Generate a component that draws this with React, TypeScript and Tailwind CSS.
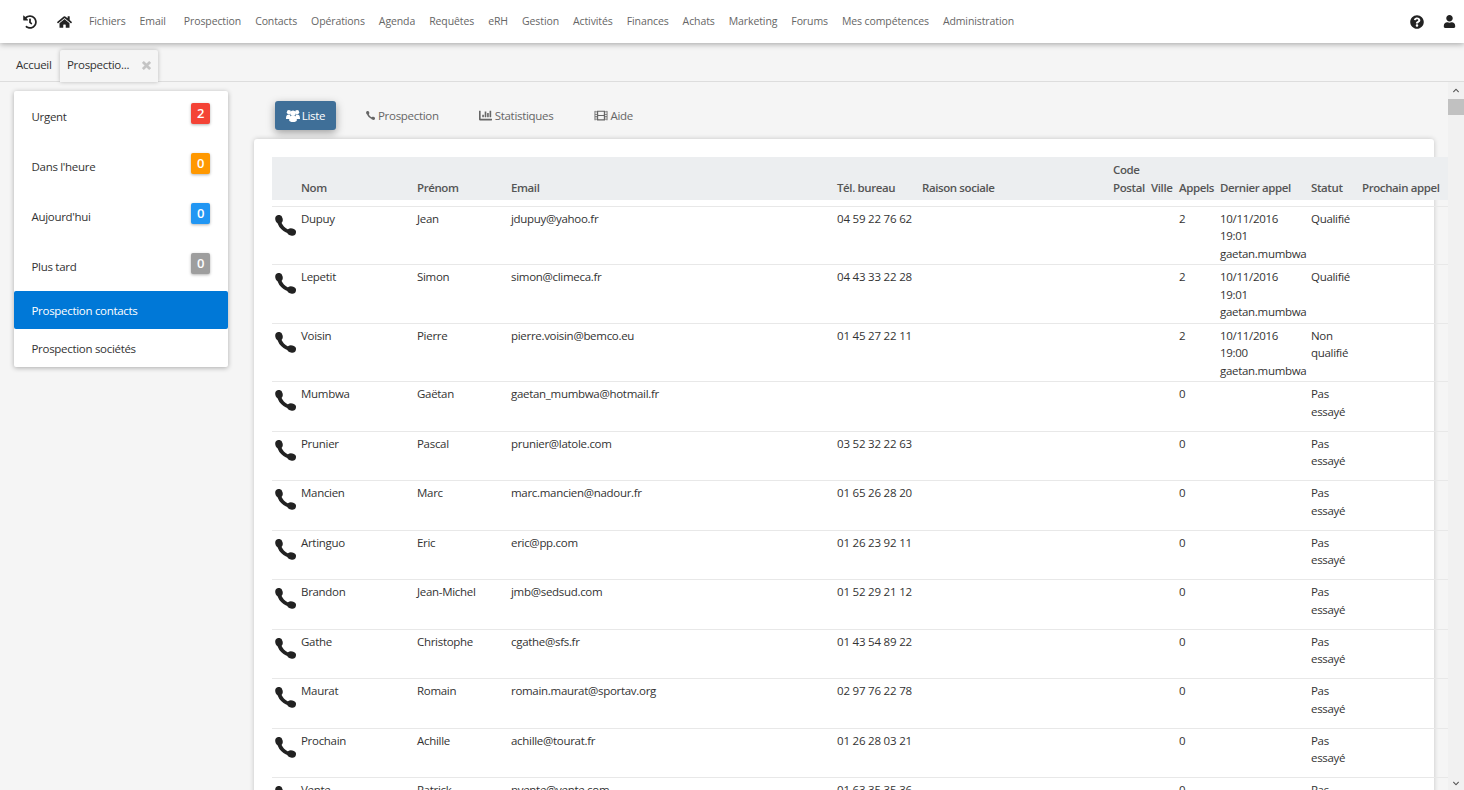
import { FaHistory, FaHome, FaQuestionCircle, FaUser, FaChartBar, FaFilm, FaChevronUp, FaChevronDown } from "react-icons/fa";

const menus = ["Fichiers", "Email", "Prospection", "Contacts", "Opérations", "Agenda", "Requêtes", "eRH", "Gestion", "Activités", "Finances", "Achats", "Marketing", "Forums", "Mes compétences", "Administration"];

const counters = [
  { label: "Urgent", count: 2, color: "bg-[#f44336]" },
  { label: "Dans l'heure", count: 0, color: "bg-[#ff9800]" },
  { label: "Aujourd'hui", count: 0, color: "bg-[#2196f3]" },
  { label: "Plus tard", count: 0, color: "bg-[#9e9e9e]" },
];

const rows = [
  ["Dupuy", "Jean", "jdupuy@yahoo.fr", "04 59 22 76 62", "2", "10/11/2016 19:01 gaetan.mumbwa", "Qualifié"],
  ["Lepetit", "Simon", "simon@climeca.fr", "04 43 33 22 28", "2", "10/11/2016 19:01 gaetan.mumbwa", "Qualifié"],
  ["Voisin", "Pierre", "pierre.voisin@bemco.eu", "01 45 27 22 11", "2", "10/11/2016 19:00 gaetan.mumbwa", "Non qualifié"],
  ["Mumbwa", "Gaëtan", "gaetan_mumbwa@hotmail.fr", "", "0", "", "Pas essayé"],
  ["Prunier", "Pascal", "prunier@latole.com", "03 52 32 22 63", "0", "", "Pas essayé"],
  ["Mancien", "Marc", "marc.mancien@nadour.fr", "01 65 26 28 20", "0", "", "Pas essayé"],
  ["Artinguo", "Eric", "eric@pp.com", "01 26 23 92 11", "0", "", "Pas essayé"],
  ["Brandon", "Jean-Michel", "jmb@sedsud.com", "01 52 29 21 12", "0", "", "Pas essayé"],
  ["Gathe", "Christophe", "cgathe@sfs.fr", "01 43 54 89 22", "0", "", "Pas essayé"],
  ["Maurat", "Romain", "romain.maurat@sportav.org", "02 97 76 22 78", "0", "", "Pas essayé"],
  ["Prochain", "Achille", "achille@tourat.fr", "01 26 28 03 21", "0", "", "Pas essayé"],
  ["Vente", "Patrick", "pvente@vente.com", "01 63 35 35 36", "0", "", "Pas essayé"],
];

const widths = [26, 116, 94, 326, 85, 191, 38, 28, 41, 91, 51, 89];

// handset with heavy ends and a thin neck, as in the row icons
function Handset({ className }: { className: string }) {
  return (
    <svg viewBox="0 0 21 21" className={className} fill="currentColor">
      <path d="M4 3.5C3.6 10.5 9.5 16.8 17 17" fill="none" stroke="currentColor" strokeWidth="3.8" />
      <ellipse cx="4" cy="4.2" rx="3.7" ry="4.2" transform="rotate(-12 4 4.2)" />
      <ellipse cx="16.6" cy="17" rx="4.4" ry="3.6" transform="rotate(12 16.6 17)" />
    </svg>
  );
}

// three busts, the middle one in front
function Group({ className }: { className: string }) {
  return (
    <svg viewBox="0 0 14 13" className={className} fill="currentColor">
      <circle cx="2.9" cy="3.2" r="2.1" />
      <circle cx="11.1" cy="3.2" r="2.1" />
      <path d="M0 9.5C0 6.5 1.2 5.6 3 5.6h1.2v4.4H0zM14 9.5c0-3-1.2-3.9-3-3.9H9.8v4.4H14z" />
      <circle cx="7" cy="4.2" r="2.7" />
      <path d="M3.2 11.5V9.6c0-2 1.2-2.9 2.4-2.9h2.8c1.2 0 2.4.9 2.4 2.9v1.9c0 .9-1.6 1.5-3.8 1.5s-3.8-.6-3.8-1.5z" />
    </svg>
  );
}

export default function App() {
  return (
    <div className="h-[790px] overflow-hidden bg-[#f5f5f5] font-['Open_Sans',sans-serif] text-[11.5px] leading-[17.5px] tracking-[-0.3px] text-[#333]">
      {/* top menu */}
      <header className="relative z-20 flex h-[43px] items-center bg-white pl-[23px] pr-[8px] shadow-[0_1px_6px_rgba(0,0,0,0.35)]">
        <FaHistory className="h-[14px] w-[14px] text-[#222]" />
        <FaHome className="ml-[20px] h-[14px] w-[15px] text-[#222]" />
        <nav className="ml-[17px] mt-[1px] flex gap-[14px] text-[10.5px] tracking-[-0.1px] text-[#666]">
          {menus.map((m) => (
            <span key={m} className={m === "Prospection" ? "ml-[4px]" : ""}>{m}</span>
          ))}
        </nav>
        <div className="ml-auto flex items-center gap-[19px]">
          <FaQuestionCircle className="h-[14px] w-[14px] text-[#222]" />
          <FaUser className="h-[13px] w-[13px] text-[#222]" />
        </div>
      </header>

      {/* open tabs */}
      <div className="flex h-[39px] items-end border-b border-[#ddd] pl-[16px]">
        <span className="mb-[8px] w-[44px]">Accueil</span>
        <div className="relative top-px flex h-[32px] w-[98px] items-center justify-between rounded-t-[2px] bg-[#f5f5f5] pb-[2px] pl-[7px] pr-[7px] shadow-[0_0_4px_rgba(0,0,0,0.25)]">
          <span>Prospectio...</span>
          <svg viewBox="0 0 10 10" className="h-[9px] w-[9px] text-[#c4c4c4]" stroke="currentColor" strokeWidth="3">
            <path d="M1 1l8 8M9 1l-8 8" />
          </svg>
        </div>
      </div>

      <div className="flex h-[708px]">
        <div className="flex w-[1448px] items-start overflow-hidden">
          {/* left menu */}
          <aside className="ml-[14px] mt-[9px] w-[214px] shrink-0 rounded-[2px] bg-white shadow-[0_1px_5px_rgba(0,0,0,0.3)]">
            {counters.map((c) => (
              <div key={c.label} className="relative flex h-[50px] items-center pl-[17.5px]">
                <span className="mt-[1px]">{c.label}</span>
                <span className={`absolute left-[177px] top-[12px] flex h-[21px] w-[19px] items-center justify-center rounded-[2px] text-[13px] font-semibold text-white shadow-[0_1px_3px_rgba(0,0,0,0.3)] ${c.color}`}>{c.count}</span>
              </div>
            ))}
            <div className="flex h-[38px] items-center rounded-[2px] bg-[#0078d7] pl-[17.5px] pt-[2px] text-white">Prospection contacts</div>
            <div className="flex h-[38px] items-center pl-[17.5px] pt-[2px]">Prospection sociétés</div>
          </aside>

          <main className="ml-[26px] flex w-[1194px] shrink-0 flex-col">
            {/* view buttons */}
            <div className="ml-[21px] mt-[19px] flex h-[29px] items-center text-[#666]">
              <span className="flex h-[29px] w-[61px] items-center justify-center gap-[2px] rounded-[3px] bg-[#3f6f98] text-white shadow-[0_3px_8px_rgba(0,0,0,0.35)]">
                <Group className="h-[13px] w-[14px]" />Liste
              </span>
              <span className="ml-[30px] flex items-center gap-[3px]"><Handset className="h-[9px] w-[9px]" />Prospection</span>
              <span className="ml-[40px] flex items-center gap-[3px]"><FaChartBar className="h-[13px] w-[13px]" />Statistiques</span>
              <span className="ml-[41px] flex items-center gap-[2px]"><FaFilm className="h-[13px] w-[14px]" />Aide</span>
            </div>

            {/* list */}
            <div className="mt-[9px] h-[660px] w-[1180px] rounded-t-[3px] bg-white pl-[18px] pt-[18px] shadow-[0_0_5px_rgba(0,0,0,0.2)]">
              <table className="w-[1176px] table-fixed border-collapse">
                <colgroup>
                  {widths.map((w, i) => <col key={i} style={{ width: w }} />)}
                </colgroup>
                <thead>
                  <tr className="h-[43px] bg-[#eceef0] text-left align-bottom text-[#555]">
                    <th />
                    <th className="px-[3px] pb-[4px] font-semibold tracking-[-0.4px]">Nom</th>
                    <th className="px-[3px] pb-[4px] font-semibold tracking-[-0.4px]">Prénom</th>
                    <th className="px-[3px] pb-[4px] font-semibold tracking-[-0.4px]">Email</th>
                    <th className="whitespace-nowrap px-[3px] pb-[4px] font-semibold tracking-[-0.4px]">Tél. bureau</th>
                    <th className="px-[3px] pb-[4px] font-semibold tracking-[-0.4px]">Raison sociale</th>
                    <th className="px-[3px] pb-[4px] font-semibold tracking-[-0.4px]">Code Postal</th>
                    <th className="px-[3px] pb-[4px] font-semibold tracking-[-0.4px]">Ville</th>
                    <th className="px-[3px] pb-[4px] font-semibold tracking-[-0.4px]">Appels</th>
                    <th className="whitespace-nowrap px-[3px] pb-[4px] font-semibold tracking-[-0.4px]">Dernier appel</th>
                    <th className="px-[3px] pb-[4px] font-semibold tracking-[-0.4px]">Statut</th>
                    <th className="whitespace-nowrap px-[3px] pb-[4px] font-semibold tracking-[-0.4px]">Prochain appel</th>
                  </tr>
                  <tr className="h-[6px]"><th colSpan={12} /></tr>
                </thead>
                <tbody>
                  {rows.map((r) => (
                    <tr key={r[0]} className={`border-t border-[#e8e8e8] align-top ${r[5] ? "h-[58.5px]" : "h-[49.5px]"}`}>
                      <td className="pl-[3px] pt-[8px]"><Handset className="h-[21px] w-[21px] text-[#222]" /></td>
                      <td className="px-[3px] pb-[1.75px] pt-[3.25px]">{r[0]}</td>
                      <td className="px-[3px] pb-[1.75px] pt-[3.25px]">{r[1]}</td>
                      <td className="px-[3px] pb-[1.75px] pt-[3.25px]">{r[2]}</td>
                      <td className="px-[3px] pb-[1.75px] pt-[3.25px] tracking-[-0.2px]">{r[3]}</td>
                      <td />
                      <td />
                      <td />
                      <td className="px-[3px] pb-[1.75px] pt-[3.25px]">{r[4]}</td>
                      <td className="px-[3px] pb-[1.75px] pt-[3.25px]">{r[5]}</td>
                      <td className="px-[3px] pb-[1.75px] pt-[3.25px]">{r[6]}</td>
                      <td />
                    </tr>
                  ))}
                </tbody>
              </table>
            </div>
          </main>
        </div>

        {/* scrollbar */}
        <div className="flex w-[16px] shrink-0 flex-col items-center bg-[#f1f1f1]">
          <FaChevronUp className="mt-[5px] h-[7px] w-[8px] text-[#555]" />
          <div className="mt-[5px] h-[16px] w-full bg-[#c1c1c1]" />
          <FaChevronDown className="mb-[3px] mt-auto h-[7px] w-[8px] text-[#555]" />
        </div>
      </div>
    </div>
  );
}
